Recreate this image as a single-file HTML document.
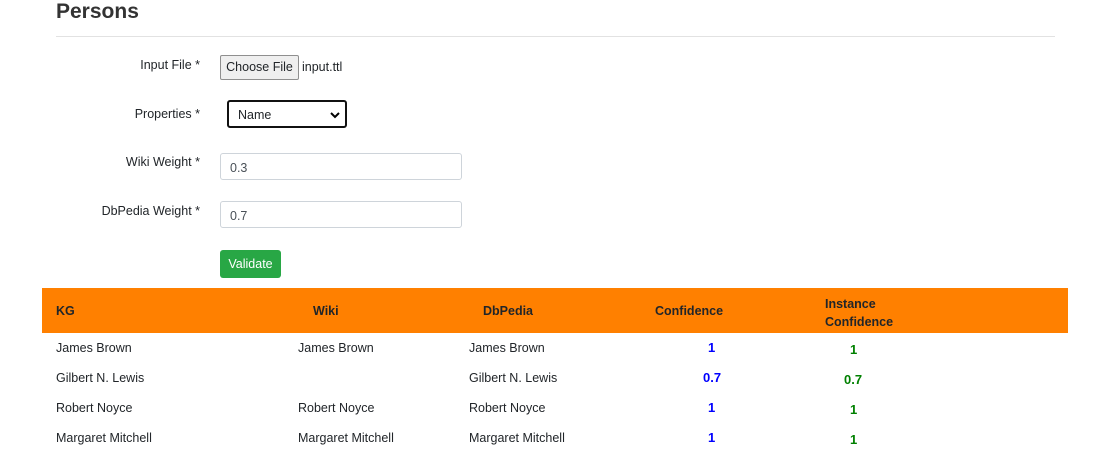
<!DOCTYPE html>
<html><head><style>
body{margin:0;width:1105px;height:476px;background:#fff;font-family:"Liberation Sans",sans-serif;color:#212529;position:relative;overflow:hidden}
.a{position:absolute;white-space:nowrap}
.lbl{font-size:12.5px;text-align:right;width:200px;left:0}
.inp{position:absolute;left:220px;width:242px;height:25px;border:1px solid #ced4da;border-radius:3px;font-size:12.5px;line-height:25px;padding-left:9px;box-sizing:border-box;color:#495057}
.t{font-size:12.5px}
.h{font-size:12.5px;font-weight:bold}
.b{color:#0000ff;font-weight:bold;font-size:13px}
.g{color:#008000;font-weight:bold;font-size:13px}
</style></head><body>
<div class="a" style="left:56px;top:0px;font-size:21px;font-weight:bold;color:#333">Persons</div>
<div class="a" style="left:56px;top:36px;width:999px;height:1px;background:#e2e2e2"></div>

<div class="a lbl" style="top:58px">Input File *</div>
<div class="a" style="left:220px;top:55px;width:77px;height:23px;border:1px solid #8f8f8f;border-radius:2px;background:#efefef;font-size:12.5px;line-height:23px;text-align:center">Choose File</div>
<div class="a" style="left:302px;top:60px;font-size:12.5px">input.ttl</div>

<div class="a lbl" style="top:107px">Properties *</div>
<div class="a" style="left:227px;top:100px;width:120px;height:28px;border:2px solid #111;border-radius:3px;box-sizing:border-box;font-size:12.5px;line-height:26px;padding-left:9px">Name<svg style="position:absolute;right:5px;top:9px" width="10" height="8" viewBox="0 0 10 8"><path d="M1 2l4 4 4-4" fill="none" stroke="#000" stroke-width="2"/></svg></div>

<div class="a lbl" style="top:155px">Wiki Weight *</div>
<div class="inp" style="top:153px;height:27px;line-height:29px">0.3</div>
<div class="a lbl" style="top:204px">DbPedia Weight *</div>
<div class="inp" style="top:201px;height:27px;line-height:29px">0.7</div>

<div class="a" style="left:220px;top:250px;width:61px;height:28px;background:#28a745;border-radius:3px;color:#fff;font-size:12.5px;line-height:28px;text-align:center">Validate</div>

<div class="a" style="left:42px;top:288px;width:1026px;height:45px;background:#ff8000"></div>
<div class="a h" style="left:56px;top:304px">KG</div>
<div class="a h" style="left:313px;top:304px">Wiki</div>
<div class="a h" style="left:483px;top:304px">DbPedia</div>
<div class="a h" style="left:655px;top:304px">Confidence</div>
<div class="a h" style="left:825px;top:295px;line-height:18px">Instance<br>Confidence</div>

<div class="a t" style="left:56px;top:341px">James Brown</div>
<div class="a t" style="left:298px;top:341px">James Brown</div>
<div class="a t" style="left:469px;top:341px">James Brown</div>
<div class="a b" style="left:708px;top:340px">1</div>
<div class="a g" style="left:850px;top:342px">1</div>

<div class="a t" style="left:56px;top:371px">Gilbert N. Lewis</div>
<div class="a t" style="left:469px;top:371px">Gilbert N. Lewis</div>
<div class="a b" style="left:703px;top:370px">0.7</div>
<div class="a g" style="left:844px;top:372px">0.7</div>

<div class="a t" style="left:56px;top:401px">Robert Noyce</div>
<div class="a t" style="left:298px;top:401px">Robert Noyce</div>
<div class="a t" style="left:469px;top:401px">Robert Noyce</div>
<div class="a b" style="left:708px;top:400px">1</div>
<div class="a g" style="left:850px;top:402px">1</div>

<div class="a t" style="left:56px;top:431px">Margaret Mitchell</div>
<div class="a t" style="left:298px;top:431px">Margaret Mitchell</div>
<div class="a t" style="left:469px;top:431px">Margaret Mitchell</div>
<div class="a b" style="left:708px;top:430px">1</div>
<div class="a g" style="left:850px;top:432px">1</div>
</body></html>
